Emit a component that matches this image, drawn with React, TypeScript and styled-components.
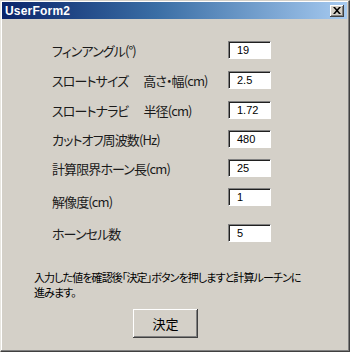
import React from "react";
import styled, { createGlobalStyle } from "styled-components";

const Global = createGlobalStyle`
  html, body { margin: 0; padding: 0; background: #d4d0c8; }
  * { box-sizing: border-box; }
`;

const Window = styled.div`
  width: 350px;
  height: 352px;
  background: #d4d0c8;
  display: flex;
  flex-direction: column;
  border-top: 1px solid #d4d0c8;
  border-left: 1px solid #e8e6e0;
  border-right: 1px solid #404040;
  border-bottom: 1px solid #404040;
  box-shadow: inset -1px -1px 0 #808080, inset 1px 1px 0 #ffffff;
  padding: 1px 2px 2px 1px;
  font-family: "Noto Sans CJK JP", "Liberation Sans", sans-serif;
  font-feature-settings: "palt";
`;

const TitleBar = styled.div`
  height: 17px;
  display: flex;
  align-items: center;
  justify-content: space-between;
  padding: 0 3px 0 3px;
  background: linear-gradient(to right, #0a246a 0%, #3a6ea5 45%, #a6caf0 100%);
`;

const Title = styled.span`
  color: #ffffff;
  font-family: "Liberation Sans", "DejaVu Sans", sans-serif;
  font-weight: bold;
  font-size: 12px;
  letter-spacing: 0.2px;
`;

const CloseButton = styled.div`
  width: 14px;
  height: 12px;
  background: #d4d0c8;
  box-shadow: inset -1px -1px 0 #404040, inset 1px 1px 0 #ffffff, inset -2px -2px 0 #808080;
  display: flex;
  align-items: center;
  justify-content: center;
`;

const Body = styled.div`
  flex: 1;
  display: flex;
  flex-direction: column;
  padding: 22px 0 0 0;
`;

const Rows = styled.div`
  display: flex;
  flex-direction: column;
`;

const Row = styled.div<{ $top: number }>`
  display: grid;
  grid-template-columns: 176px 43px;
  align-items: center;
  height: 17px;
  margin-top: ${(p) => p.$top}px;
  padding-left: 50px;
`;

const Label = styled.span<{ $shift?: number }>`
  font-size: 13px;
  letter-spacing: -0.9px;
  color: #1a1a1a;
  white-space: nowrap;
  line-height: 17px;
  position: relative;
  top: ${(p) => p.$shift ?? 0}px;
`;

const Spacer = styled.span<{ $w: number }>`
  display: inline-block;
  width: ${(p) => p.$w}px;
`;

const Field = styled.div`
  height: 18px;
  background: #ffffff;
  border-top: 1px solid #808080;
  border-left: 1px solid #808080;
  border-right: 1px solid #ffffff;
  border-bottom: 1px solid #ffffff;
  box-shadow: inset 1px 1px 0 #202020;
  padding-left: 8px;
  font-family: "Liberation Sans", sans-serif;
  font-size: 11px;
  line-height: 16px;
  color: #000;
`;

const Note = styled.div`
  margin: 29px 0 0 32px;
  display: flex;
  flex-direction: column;
  gap: 1px;
  font-size: 11px;
  letter-spacing: -0.9px;
  line-height: 14px;
  white-space: nowrap;
  color: #000;
`;

const ButtonRow = styled.div`
  display: flex;
  padding-left: 131px;
  margin-top: 10px;
`;

const Button = styled.div`
  width: 65px;
  height: 29px;
  background: #d4d0c8;
  box-shadow: inset -1px -1px 0 #404040, inset 1px 1px 0 #ffffff, inset -2px -2px 0 #808080;
  display: flex;
  align-items: center;
  justify-content: center;
  font-size: 13px;
  color: #000;
`;

const rows: { label: string[]; value: string; top: number; shift?: number }[] = [
  { label: ["フィンアングル(°)"], value: "19", top: 0 },
  { label: ["スロートサイズ", "高さ・幅(cm)"], value: "2.5", top: 13 },
  { label: ["スロートナラビ", "半径(cm)"], value: "1.72", top: 13 },
  { label: ["カットオフ周波数(Hz)"], value: "480", top: 12 },
  { label: ["計算限界ホーン長(cm)"], value: "25", top: 12 },
  { label: ["解像度(cm)"], value: "1", top: 12, shift: 4 },
  { label: ["ホーンセル数"], value: "5", top: 19 },
];

export default function App() {
  return (
    <>
      <Global />
      <Window>
        <TitleBar>
          <Title>UserForm2</Title>
          <CloseButton>
            <svg width="8" height="7" viewBox="0 0 8 7">
              <path d="M0 0 L2 0 L4 2.2 L6 0 L8 0 L5 3.5 L8 7 L6 7 L4 4.8 L2 7 L0 7 L3 3.5 Z" fill="#000" />
            </svg>
          </CloseButton>
        </TitleBar>
        <Body>
          <Rows>
            {rows.map((r) => (
              <Row key={r.label.join("")} $top={r.top}>
                <Label $shift={r.shift}>
                  {r.label[0]}
                  {r.label[1] && (
                    <>
                      <Spacer $w={15} />
                      {r.label[1]}
                    </>
                  )}
                </Label>
                <Field>{r.value}</Field>
              </Row>
            ))}
          </Rows>
          <Note>
            <span>入力した値を確認後「決定」ボタンを押しますと計算ルーチンに</span>
            <span>進みます。</span>
          </Note>
          <ButtonRow>
            <Button>決定</Button>
          </ButtonRow>
        </Body>
      </Window>
    </>
  );
}
